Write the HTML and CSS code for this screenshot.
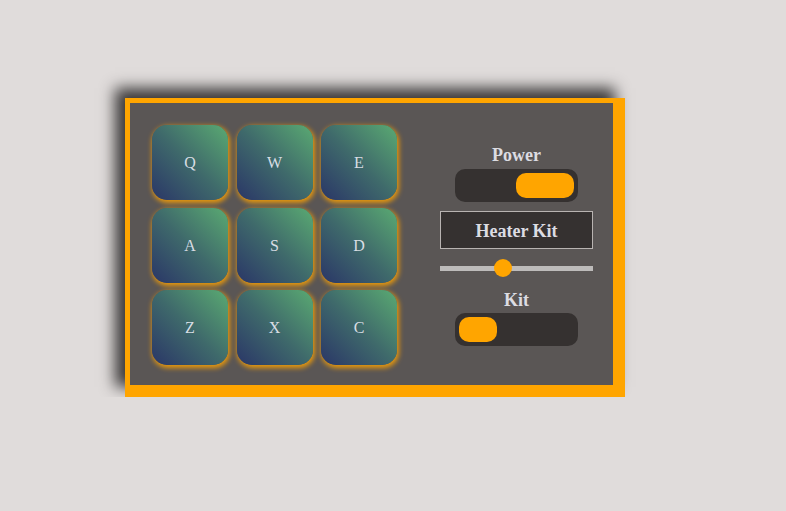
FILE: index.html
```html
<!DOCTYPE html>
<html lang="en">
<head>
<meta charset="utf-8">
<title>Drum Machine</title>
<link rel="stylesheet" href="styles.css">
</head>
<body>
<div class="machine">
  <div class="pads">
    <div class="pad">Q</div>
    <div class="pad">W</div>
    <div class="pad">E</div>
    <div class="pad">A</div>
    <div class="pad">S</div>
    <div class="pad">D</div>
    <div class="pad">Z</div>
    <div class="pad">X</div>
    <div class="pad">C</div>
  </div>
  <div class="controls">
    <div class="label label-power">Power</div>
    <div class="switch switch-on"><div class="knob knob-power"></div></div>
    <div class="display">Heater Kit</div>
    <div class="slider"><div class="track"></div><div class="thumb"></div></div>
    <div class="label label-kit">Kit</div>
    <div class="switch switch-off"><div class="knob knob-kit"></div></div>
  </div>
</div>
</body>
</html>
```

FILE: styles.css
```css
html, body {
  margin: 0;
  padding: 0;
}
body {
  background: #e0dcdb;
  padding: 98px 0 0 125px;
  font-family: "Liberation Serif", "Times New Roman", serif;
  color: #dcdce2;
}
.machine {
  background: #5a5655;
  border-style: solid;
  border-color: #ffa500;
  border-width: 5px 12px 12px 5px;
  box-shadow: -10px -10px 14px #3a3838;
  display: flex;
  align-items: flex-start;
  padding: 22px 20px 0 22px;
  box-sizing: content-box;
  width: 441px;
  height: 260px;
}
.pads {
  display: grid;
  grid-template-columns: repeat(3, 76px);
  grid-auto-rows: 75px;
  column-gap: 8.5px;
  row-gap: 7.5px;
  width: 245px;
}
.pad {
  border-radius: 15px;
  background: linear-gradient(45deg, #2a3667 0%, #3f6a6b 50%, #5aaa72 100%);
  box-shadow: 1px 2px 5px 1px #e8980c;
  display: flex;
  align-items: center;
  justify-content: center;
  font-size: 16px;
  padding-top: 1px;
  box-sizing: border-box;
  color: #d8dde4;
}
.controls {
  margin-left: 43px;
  width: 153px;
  display: flex;
  flex-direction: column;
  align-items: center;
  padding-top: 20px;
}
.label {
  font-weight: bold;
  font-size: 18px;
  line-height: 20px;
  height: 20px;
}
.switch {
  width: 123px;
  height: 33px;
  background: #353130;
  border-radius: 10px;
  display: flex;
  align-items: center;
  padding: 0 4px;
  box-sizing: border-box;
}
.switch-on {
  justify-content: flex-end;
  margin-top: 4px;
}
.switch-off {
  margin-top: 3px;
}
.knob {
  height: 25px;
  background: #ffa500;
  border-radius: 10px;
}
.knob-power { width: 58px; }
.knob-kit { width: 38px; }
.display {
  margin-top: 9px;
  width: 153px;
  height: 38px;
  box-sizing: border-box;
  border: 1px solid #b8b3b1;
  background: #353130;
  font-weight: bold;
  font-size: 18px;
  display: flex;
  align-items: center;
  justify-content: center;
  padding-top: 2px;
}
.slider {
  margin-top: 10px;
  width: 153px;
  height: 18px;
  position: relative;
  display: flex;
  align-items: center;
}
.track {
  width: 100%;
  height: 5px;
  background: #bdbbba;
}
.thumb {
  position: absolute;
  left: 54px;
  top: 0;
  width: 18px;
  height: 18px;
  border-radius: 50%;
  background: #ffa500;
}
.label-kit {
  margin-top: 13px;
}
```
